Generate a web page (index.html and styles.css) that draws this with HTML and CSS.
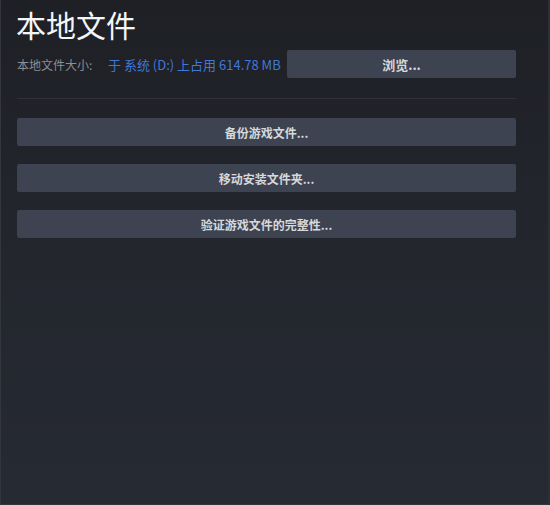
FILE: index.html
```html
<!DOCTYPE html>
<html lang="zh-CN">
<head>
<meta charset="utf-8">
<link rel="stylesheet" href="styles.css">
</head>
<body>
<div class="panel">
  <h1 class="title">本地文件</h1>
  <div class="size-row">
    <span class="label">本地文件大小:</span>
    <span class="value">于 系统 (D:) 上占用 614.78 MB</span>
    <button class="btn browse">浏览...</button>
  </div>
  <div class="sep"></div>
  <div class="actions">
    <button class="btn">备份游戏文件...</button>
    <button class="btn">移动安装文件夹...</button>
    <button class="btn">验证游戏文件的完整性...</button>
  </div>
</div>
</body>
</html>
```
FILE: styles.css
```css
html, body {
  margin: 0;
  padding: 0;
  width: 550px;
  height: 505px;
  overflow: hidden;
}
body {
  font-family: "Noto Sans CJK SC", "Noto Sans", sans-serif;
  background: linear-gradient(180deg, #1e2025 0%, #23262d 50%, #262a33 100%);
}
.panel {
  box-sizing: border-box;
  width: 550px;
  height: 505px;
  padding: 5px 34px 0 17px;
  box-shadow: inset 1px 0 0 #33363d, inset -2px 0 0 #2c2f36, inset 0 -1px 0 #33363d;
}
.title {
  margin: 0 0 0 -1px;
  font-size: 30px;
  font-weight: 400;
  line-height: 38px;
  color: #f4f5f6;
}
.size-row {
  display: flex;
  align-items: center;
  margin-top: 7px;
  height: 28px;
}
.label {
  font-size: 12px;
  color: #8a8e95;
  width: 91px;
}
.value {
  font-size: 13px;
  color: #3f78d9;
  width: 179px;
}
.btn {
  font-family: "Noto Sans CJK SC", "Noto Sans", sans-serif;
  height: 28px;
  border: none;
  border-radius: 2px;
  background: #3d4350;
  color: #d6d8db;
  font-size: 12px;
  font-weight: 700;
  padding: 0;
  cursor: pointer;
}
.browse {
  width: 229px;
  font-size: 13px;
}
.sep {
  height: 1px;
  background: #2f323a;
  margin-top: 20px;
}
.actions {
  display: flex;
  flex-direction: column;
  gap: 18px;
  margin-top: 19px;
}
.actions .btn {
  width: 100%;
}
```
